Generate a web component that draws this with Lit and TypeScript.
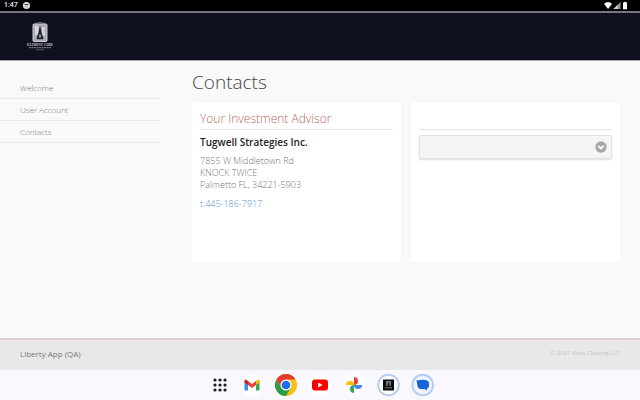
import { LitElement, html, css } from "lit";
import { customElement } from "lit/decorators.js";

@customElement("status-bar")
class StatusBar extends LitElement {
  static styles = css`
    :host {
      display: flex;
      align-items: center;
      height: 11px;
      padding: 0 12px 0 4px;
      background: #000;
      color: #eee;
      font: 500 7px/13px Roboto, sans-serif;
      border-bottom: 2px solid #77777b;
    }
    .badge { margin-left: 4px; }
    .signals { margin-left: auto; display: flex; gap: 1px; }
    svg { display: block; }
  `;
  render() {
    return html`
      <span>1:47</span>
      <svg class="badge" width="9" height="9" viewBox="0 0 9 9">
        <circle cx="4.5" cy="4.5" r="3.6" fill="#ddd" />
        <path d="M2.6 3.6h3.8" stroke="#333" stroke-width="1" />
        <path d="M3.2 5.8h2.6" stroke="#888" stroke-width=".6" />
      </svg>
      <div class="signals">
        <svg width="8" height="9" viewBox="0 0 8 9">
          <path d="M0 2.8Q4-.6 8 2.8L4 8z" fill="#fff" />
        </svg>
        <svg width="8" height="9" viewBox="0 0 8 9">
          <path d="M7.5 1v7H.5z" fill="#999" />
          <path d="M4.5 4v4h-4z" fill="#ddd" />
        </svg>
        <svg width="6" height="9" viewBox="0 0 6 9">
          <path d="M1 1.6h1.2V.7h1.6v.9H5V8.3H1z" fill="#fff" />
        </svg>
      </div>
    `;
  }
}

@customElement("brand-logo")
class BrandLogo extends LitElement {
  static styles = css`
    :host {
      display: flex;
      flex-direction: column;
      align-items: center;
      width: 32px;
      color: #c9cad0;
    }
    svg { display: block; }
    .name { font: 700 4px/5px "Liberation Serif", serif; font-variant: small-caps; white-space: nowrap; }
  `;
  render() {
    return html`
      <svg width="16" height="20" viewBox="0 0 16 20">
        <path d="M3 1.5Q8-.5 13 1.5" fill="none" stroke="#6d707a" />
        <rect x="1" y="2" width="14" height="17.5" rx="1" fill="#a9acb3" stroke="#c7c8cc" />
        <path d="M3 4h3.5v9H3z" fill="#d9dade" />
        <path d="M10 5h3v9h-3z" fill="#d0d2d6" />
        <path d="M8 3.5l.8 3.2.7 3.8 1.7 4.8v2H4.8v-2l1.7-4.8.7-3.8z" fill="#22242d" />
        <path d="M7.3 12.5h1.4v3H7.3z" fill="#c9cbd0" />
      </svg>
      <span class="name">Element Core</span>
      <svg width="26" height="4" viewBox="0 0 26 4">
        <path d="M2 .7h22" stroke="#80838e" stroke-dasharray="2 .5" />
        <path d="M9 2.8h8" stroke="#555965" />
      </svg>
    `;
  }
}

@customElement("app-dock")
class AppDock extends LitElement {
  static styles = css`
    :host {
      display: flex;
      justify-content: center;
      align-items: center;
      gap: 10px;
      height: 30px;
      background: #f9f8ff;
    }
    button {
      display: block;
      width: 24px;
      height: 24px;
      padding: 0;
      border: 0;
      background: none;
    }
    svg { display: block; }
  `;
  render() {
    const rows = [7, 12, 17];
    const columns = [9, 14, 19];
    return html`
      <button aria-label="All apps">
        <svg viewBox="0 0 24 24">
          <path
            d=${rows.map((y) => columns.map((x) => `M${x} ${y}h.01`).join("")).join("")}
            stroke="#1c1c20" stroke-width="3.2" stroke-linecap="round" />
        </svg>
      </button>
      <button aria-label="Gmail">
        <svg viewBox="0 0 24 24">
          <circle cx="12" cy="12" r="11" fill="#fff" />
          <path d="M4.5 8v8.3q0 1.2 1.2 1.2H8V9z" fill="#4285f4" />
          <path d="M19.5 8v8.3q0 1.2-1.2 1.2H16V9z" fill="#34a853" />
          <path d="M16 8.3V12l3.5-2.6V7.7q0-1.2-1.2-1.2z" fill="#fbbc04" />
          <path d="M4.5 7.7v1.7L8 12V8.3L6.300 6.700q-1.800-.4-1.800 1z" fill="#c5221f" />
          <path d="M8 12V8.300L6.300 6.700 12 10.900l5.700-4.200L16 8.300V12l-4 3z" fill="#ea4335" />
        </svg>
      </button>
      <button aria-label="Chrome">
        <svg viewBox="0 0 24 24">
          <circle cx="12" cy="12" r="11" fill="#fbc116" />
          <path d="M2.47 6.5A11 11 0 0 1 21.53 6.5H12L7.24 14.75z" fill="#e33b2e" />
          <path d="M2.47 6.5A11 11 0 0 0 12 23l4.76-8.25H7.24z" fill="#2a9d4a" />
          <circle cx="12" cy="12" r="5.5" fill="#fff" />
          <circle cx="12" cy="12" r="4.3" fill="#1a6fe8" />
        </svg>
      </button>
      <button aria-label="YouTube">
        <svg viewBox="0 0 24 24">
          <circle cx="12" cy="12" r="11" fill="#fff" />
          <rect x="4" y="6.5" width="16" height="11" rx="3" fill="#f00" />
          <path d="M10.2 9.5v5l4.4-2.5z" fill="#fff" />
        </svg>
      </button>
      <button aria-label="Photos">
        <svg viewBox="0 0 24 24">
          <circle cx="12" cy="12" r="11" fill="#fff" />
          <path d="M12 12V4a4 4 0 0 1 0 8z" fill="#ea4335" />
          <path d="M12 12h8a4 4 0 0 1-8 0z" fill="#4285f4" />
          <path d="M12 12v8a4 4 0 0 1 0-8z" fill="#34a853" />
          <path d="M12 12H4a4 4 0 0 1 8 0z" fill="#fbbc04" />
        </svg>
      </button>
      <button aria-label="Liberty App">
        <svg viewBox="0 0 24 24">
          <circle cx="12.5" cy="12" r="10.3" fill="#fff" stroke="#bccdf0" stroke-width="2" />
          <rect x="7" y="6.5" width="11" height="11" fill="#0c0c10" />
          <rect x="10" y="8" width="5" height="5" fill="#77797e" />
          <path d="M12.5 8.200l1.200 4.600h-2.400z" fill="#111" />
          <path d="M9 14.800h7" stroke="#77797e" />
        </svg>
      </button>
      <button aria-label="Messages">
        <svg viewBox="0 0 24 24">
          <circle cx="12.7" cy="12" r="10.3" fill="#eef3ff" stroke="#b4cdf5" stroke-width="2" />
          <path d="M6.500 7.500q5-1 9-.5 3.500.5 3.500 3.500v2.500q0 2-2 2.500v2l-2.500-1.500h-4q-1.800 0-2.200-2V11z" fill="#1763dc" />
          <path d="M6.500 7.500 9 11v4q-1.500-.5-1.500-3z" fill="#0b4fc0" />
        </svg>
      </button>
    `;
  }
}

@customElement("app-root")
export class AppRoot extends LitElement {
  static styles = css`
    :host {
      display: flex;
      flex-direction: column;
      min-height: 100vh;
      background: #f9f9f9;
      color: #777;
      font: 300 8px/12px "Open Sans", sans-serif;
    }
    .banner {
      display: flex;
      align-items: center;
      height: 47px;
      padding-left: 24px;
      background: #0f1120;
      border-bottom: 1px solid #aaa;
    }
    .page { display: flex; flex: 1; }
    nav { width: 25%; padding-top: 16px; }
    nav a {
      display: block;
      padding: 5px 20px 4px;
      border-bottom: 1px solid #e9e9e9;
      color: #777;
      text-decoration: none;
    }
    main { flex: 1; padding: 7px 20px 0 32px; }
    h1 { margin: 0 0 6px; font-size: 19px; font-weight: 300; line-height: 28px; color: #444; }
    .cards { display: grid; grid-template-columns: 1fr 1fr; gap: 10px; }
    .card {
      min-height: 144px;
      padding: 8px;
      background: #fff;
      border-radius: 2px;
      box-shadow: 0 0 2px #eee;
    }
    h2 {
      height: 19px;
      margin: 0 0 5px;
      border-bottom: 1px solid #e4e4e4;
      color: #bc6a60;
      font-size: 12px;
      font-weight: 300;
      line-height: 18px;
    }
    h3 { margin: 0 0 6px; color: #222; font-size: 10px; font-weight: 600; line-height: 14px; }
    .details { font-size: 9px; }
    address { margin-bottom: 7px; font-style: normal; }
    .phone { color: #5b94cc; text-decoration: none; }
    .picker { display: grid; align-items: center; }
    .picker > * { grid-area: 1 / 1; }
    select {
      appearance: none;
      width: 100%;
      height: 24px;
      border: 1px solid #e2e2e2;
      border-radius: 2px;
      background: #f5f5f5;
      box-shadow: 0 1px 2px #ddd;
    }
    .arrow { justify-self: end; margin-right: 5px; pointer-events: none; }
    footer {
      display: flex;
      justify-content: space-between;
      height: 30px;
      padding: 0 20px;
      background: #e8e8e8;
      border-top: 2px solid #decfcf;
      line-height: 28px;
    }
    .product { font-weight: 400; }
    .legal { color: #aaa; font-size: 6px; line-height: 26px; }
  `;
  render() {
    return html`
      <status-bar></status-bar>
      <header class="banner"><brand-logo></brand-logo></header>
      <div class="page">
        <nav>
          <a href="#welcome">Welcome</a>
          <a href="#account">User Account</a>
          <a href="#contacts">Contacts</a>
        </nav>
        <main>
          <h1>Contacts</h1>
          <div class="cards">
            <section class="card">
              <h2>Your Investment Advisor</h2>
              <h3>Tugwell Strategies Inc.</h3>
              <div class="details">
                <address>7855 W Middletown Rd<br />KNOCK TWICE<br />Palmetto FL, 34221-5903</address>
                <a class="phone" href="tel:445-186-7917">t:445-186-7917</a>
              </div>
            </section>
            <section class="card">
              <h2></h2>
              <div class="picker">
                <select aria-label="Contact"></select>
                <svg class="arrow" width="12" height="12" viewBox="0 0 12 12">
                  <circle cx="6" cy="6" r="5.7" fill="#a6a6a6" />
                  <path d="M3.3 4.8 6 7.5l2.7-2.7" fill="none" stroke="#fff" stroke-width="1.8" />
                </svg>
              </div>
            </section>
          </div>
        </main>
      </div>
      <footer>
        <span class="product">Liberty App (QA)</span>
        <span class="legal">© 2021 Axos Clearing LLC</span>
      </footer>
      <app-dock></app-dock>
    `;
  }
}
